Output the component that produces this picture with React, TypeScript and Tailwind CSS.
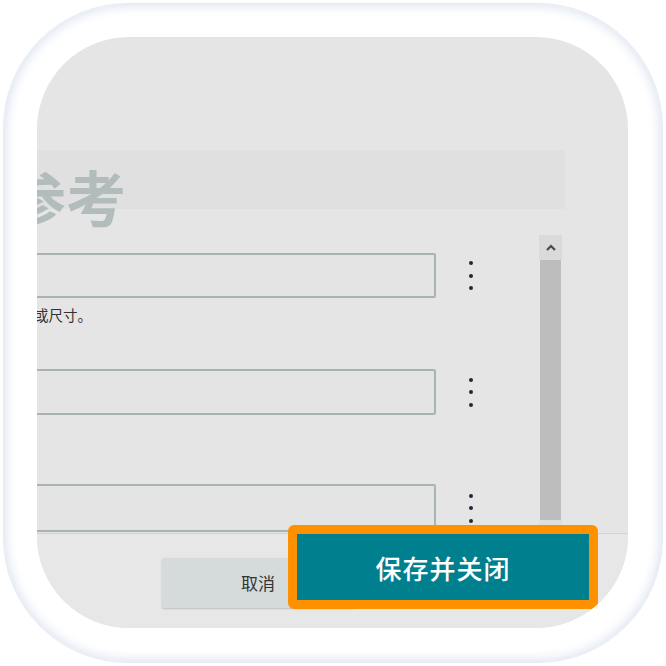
import React from "react";

function Kebab() {
  return (
    <div className="flex flex-col items-center gap-[8.5px] w-[10px]">
      <span className="block w-[4px] h-[4px] rounded-full bg-[#1e2a36]" />
      <span className="block w-[4px] h-[4px] rounded-full bg-[#1e2a36]" />
      <span className="block w-[4px] h-[4px] rounded-full bg-[#1e2a36]" />
    </div>
  );
}

export default function App() {
  const font = { fontFamily: '"Noto Sans CJK SC", "Noto Sans", sans-serif' };
  return (
    <div className="w-[666px] h-[666px] bg-white overflow-hidden" style={font}>
      <div className="m-[3px] w-[660px] h-[660px] rounded-[125px] border border-[#e6eaf2] shadow-[inset_0_0_12px_2px_#dbe2ee] p-[33px]">
        <div className="w-[591px] h-[591px] rounded-[92px] overflow-hidden bg-[#e5e5e5] flex flex-col">
          {/* header band */}
          <div className="mt-[113px] h-[59px] w-[528px] bg-[#e0e0e0] shrink-0">
            <div className="ml-[-31px] pt-[16px] text-[60px] leading-none font-bold text-[#b3bcbc] whitespace-nowrap">
              参考
            </div>
          </div>
          {/* content */}
          <div className="h-[324px] shrink-0 flex">
            <div className="w-[502px] flex flex-col">
              <div className="mt-[44px] flex items-center">
                <div className="ml-[-10px] w-[409px] h-[45px] border-2 border-[#aab3b3] rounded-[2px] bg-[#e4e4e4]" />
                <div className="ml-[30px]">
                  <Kebab />
                </div>
              </div>
              <div className="mt-[7px] ml-[-3px] text-[14.5px] leading-[20px] text-[#333]">或尺寸。</div>
              <div className="mt-[44px] flex items-center">
                <div className="ml-[-10px] w-[409px] h-[46px] border-2 border-[#aab3b3] rounded-[2px] bg-[#e4e4e4]" />
                <div className="ml-[30px]">
                  <Kebab />
                </div>
              </div>
              <div className="mt-[69px] flex items-center">
                <div className="ml-[-10px] w-[409px] h-[48px] border-2 border-[#aab3b3] rounded-[2px] bg-[#e4e4e4]" />
                <div className="ml-[30px]">
                  <Kebab />
                </div>
              </div>
            </div>
            <div className="mt-[26px] w-[23px] flex flex-col">
              <div className="h-[25px] bg-[#dadada] flex items-center justify-center">
                <svg width="10" height="7" viewBox="0 0 10 7">
                  <polyline points="1,6 5,2 9,6" fill="none" stroke="#4a4a4a" strokeWidth="2.2" />
                </svg>
              </div>
              <div className="mx-[1px] h-[260px] bg-[#bdbdbd]" />
              <div className="h-[13px] bg-[#dedede]" />
            </div>
          </div>
          {/* footer */}
          <div className="flex-1 border-t border-[#d0d5d5] bg-[#e7e7e7] flex items-start">
            <div className="ml-[125px] mt-[24px] w-[192px] h-[50px] shrink-0 rounded-[2px] bg-[#d5dada] shadow-[0_1px_2px_rgba(0,0,0,0.18)] flex items-center justify-center text-[17px] text-[#333]">
              取消
            </div>
            <div className="ml-[-66px] mt-[-9px] w-[310px] h-[84px] shrink-0 rounded-[6px] border-[9px] border-[#ff9100] bg-[#007f8f] flex items-center justify-center text-[26px] font-medium text-white tracking-[1px]">
              保存并关闭
            </div>
          </div>
        </div>
      </div>
    </div>
  );
}
